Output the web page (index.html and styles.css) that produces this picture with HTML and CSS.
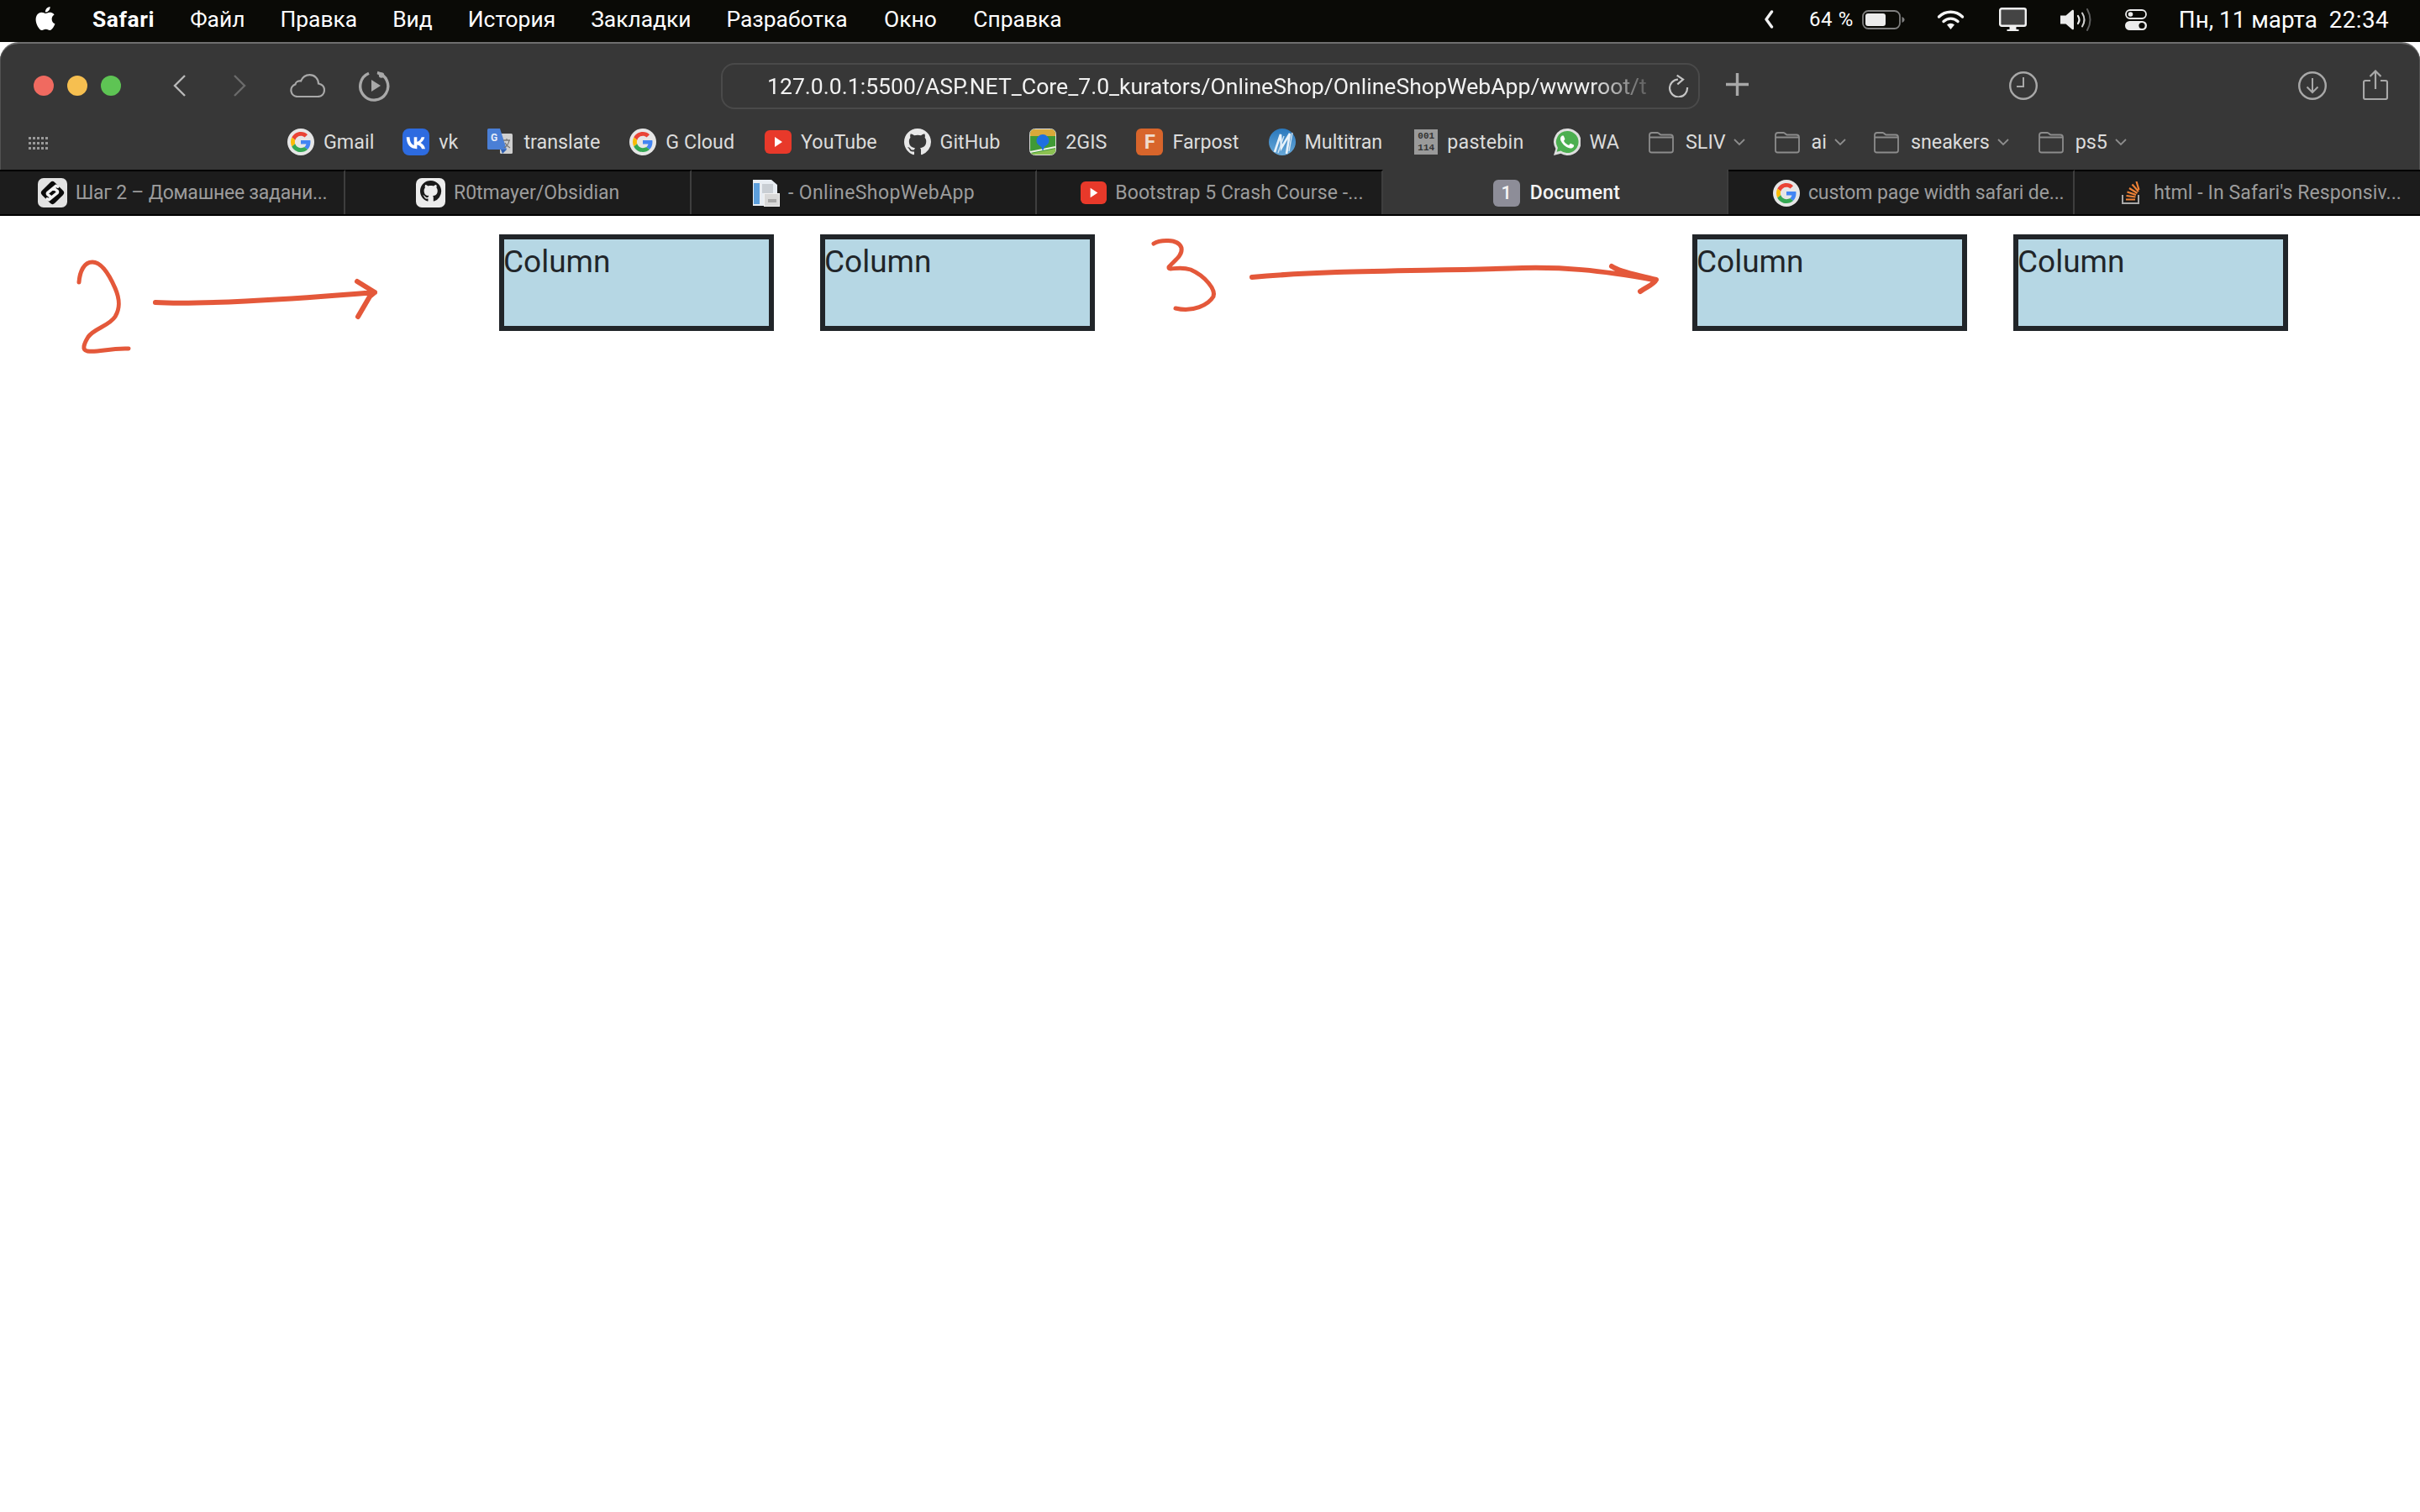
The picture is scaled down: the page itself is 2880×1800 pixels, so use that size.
FILE: index.html
```html
<!DOCTYPE html>
<html lang="ru">
<head>
<meta charset="utf-8">
<title>Document</title>
<link rel="stylesheet" href="styles.css">
</head>
<body>
<svg class="defs" width="0" height="0" aria-hidden="true">
  <symbol id="g" viewBox="-8 -8 64 64">
    <circle cx="24" cy="24" r="32" fill="#e6e6e6"/>
    <path fill="#EA4335" d="M24 9.5c3.54 0 6.71 1.22 9.21 3.6l6.85-6.85C35.9 2.38 30.47 0 24 0 14.62 0 6.51 5.38 2.56 13.22l7.98 6.19C12.43 13.72 17.74 9.5 24 9.5z"/>
    <path fill="#4285F4" d="M46.98 24.55c0-1.57-.15-3.09-.38-4.55H24v9.02h12.94c-.58 2.96-2.26 5.48-4.78 7.18l7.73 6c4.51-4.18 7.09-10.36 7.09-17.65z"/>
    <path fill="#FBBC05" d="M10.53 28.59c-.48-1.45-.76-2.99-.76-4.59s.27-3.14.76-4.59l-7.98-6.19C.92 16.46 0 20.12 0 24c0 3.88.92 7.54 2.56 10.78l7.97-6.19z"/>
    <path fill="#34A853" d="M24 48c6.48 0 11.93-2.13 16.02-5.81l-7.73-6c-2.15 1.45-4.92 2.3-8.29 2.3-6.26 0-11.57-4.22-13.47-9.91l-7.98 6.19C6.51 42.62 14.62 48 24 48z"/>
  </symbol>
  <symbol id="yt" viewBox="0 0 32 32">
    <rect x="0" y="2" width="32" height="28" rx="6" fill="#e8392a"/>
    <path d="M12 10l9 6-9 6z" fill="#fff"/>
  </symbol>
  <symbol id="gh" viewBox="0 0 16 16">
    <path fill="#e8e8e8" d="M8 0C3.58 0 0 3.58 0 8c0 3.54 2.29 6.53 5.47 7.59.4.07.55-.17.55-.38 0-.19-.01-.82-.01-1.49-2.01.37-2.53-.49-2.69-.94-.09-.23-.48-.94-.82-1.13-.28-.15-.68-.52-.01-.53.63-.01 1.08.58 1.23.82.72 1.21 1.87.87 2.33.66.07-.52.28-.87.51-1.07-1.78-.2-3.64-.89-3.64-3.95 0-.87.31-1.59.82-2.15-.08-.2-.36-1.02.08-2.12 0 0 .67-.21 2.2.82.64-.18 1.32-.27 2-.27.68 0 1.36.09 2 .27 1.53-1.04 2.2-.82 2.2-.82.44 1.1.16 1.92.08 2.12.51.56.82 1.27.82 2.15 0 3.07-1.87 3.75-3.65 3.95.29.25.54.73.54 1.48 0 1.07-.01 1.93-.01 2.2 0 .21.15.46.55.38A8.013 8.013 0 0016 8c0-4.42-3.58-8-8-8z"/>
  </symbol>
  <symbol id="folder" viewBox="0 0 30 30">
    <path d="M1 7a3 3 0 0 1 3-3h6.500c2 0 2.500 2.500 4.500 2.500h11a3 3 0 0 1 3 3V25a2.500 2.500 0 0 1-2.500 2.500h-23A2.500 2.500 0 0 1 1 25zM1 9.500h28" fill="none" stroke="#8c8c8c" stroke-width="1.800"/>
  </symbol>
  <symbol id="chev" viewBox="0 0 14 10">
    <path d="M1 2l6 6 6-6" fill="none" stroke="#8d8d8d" stroke-width="1.800"/>
  </symbol>
</svg>

<header class="menubar">
  <div class="menu-left">
    <svg class="apple" viewBox="0 0 24 24"><path fill="#fff" d="M12.152 6.896c-.948 0-2.415-1.078-3.96-1.04-2.04.027-3.91 1.183-4.961 3.014-2.117 3.675-.546 9.103 1.519 12.09 1.013 1.454 2.208 3.09 3.792 3.039 1.52-.065 2.09-.987 3.935-.987 1.831 0 2.35.987 3.96.948 1.637-.026 2.676-1.48 3.676-2.948 1.156-1.688 1.636-3.325 1.662-3.415-.039-.013-3.182-1.221-3.22-4.857-.026-3.04 2.48-4.494 2.597-4.559-1.429-2.09-3.623-2.324-4.39-2.376-2-.156-3.675 1.09-4.61 1.09zM15.53 3.83c.843-1.012 1.4-2.427 1.245-3.83-1.207.052-2.662.805-3.532 1.818-.78.896-1.454 2.338-1.273 3.714 1.338.104 2.715-.688 3.559-1.701"/></svg>
    <span class="menu-app">Safari</span>
    <span>Файл</span><span>Правка</span><span>Вид</span><span>История</span><span>Закладки</span><span>Разработка</span><span class="menu-late">Окно</span><span class="menu-late">Справка</span>
  </div>
  <div class="menu-right">
    <svg class="st-chev" viewBox="0 0 12 22"><path d="M9.500 2L3 11l6.500 9" fill="none" stroke="#f0f0f0" stroke-width="3.400" stroke-linecap="round" stroke-linejoin="round"/></svg>
    <span class="st-batt-text">64 %</span>
    <svg class="st-batt" viewBox="0 0 51 23"><rect x="1" y="1" width="44" height="21" rx="6.500" fill="none" stroke="#7f7f7f" stroke-width="1.800"/><rect x="4" y="4" width="24" height="15" rx="3" fill="#ececec"/><path d="M47.500 8c2 1 3 2 3 3.500s-1 2.500-3 3.500z" fill="#7f7f7f"/></svg>
    <svg class="st-wifi" viewBox="0 0 33 25"><path d="M2.500 9a20 20 0 0 1 28 0M8 14.500a12.500 12.500 0 0 1 17 0" fill="none" stroke="#f4f4f4" stroke-width="3.400" stroke-linecap="round"/><path d="M12 18.500a6.500 6.500 0 0 1 9 0L16.500 24z" fill="#f4f4f4"/></svg>
    <svg class="st-mon" viewBox="0 0 33 28"><rect x="1.200" y="1.200" width="30.600" height="20.600" rx="2" fill="#444" stroke="#f0f0f0" stroke-width="2.400"/><path d="M12.500 23h8v3h3v2h-14v-2h3z" fill="#f0f0f0"/></svg>
    <svg class="st-sound" viewBox="0 0 39 27"><path d="M1 8.500h6.500L15 2c1-.8 2 0 2 1v21c0 1-1 1.800-2 1l-7.500-6.500H1z" fill="#ececec"/><path d="M22 9q3 4.500 0 9" fill="none" stroke="#ececec" stroke-width="2.200" stroke-linecap="round"/><path d="M27 5.500q5 8 0 16" fill="none" stroke="#d0d0d0" stroke-width="2" stroke-linecap="round"/><path d="M33 1q7 12.500 0 25" fill="none" stroke="#5f5f5f" stroke-width="2" stroke-linecap="round"/></svg>
    <svg class="st-ctl" viewBox="0 0 26 25"><rect x="1" y="1" width="24" height="10" rx="5" fill="none" stroke="#ececec" stroke-width="1.800"/><circle cx="6.500" cy="6" r="2.800" fill="#ececec"/><rect x="0" y="14" width="26" height="11" rx="5.500" fill="#ececec"/><circle cx="20" cy="19.500" r="3.600" fill="#0a0a06"/></svg>
    <span class="st-date">Пн, 11 марта</span>
    <span class="st-time">22:34</span>
  </div>
</header>

<div class="window">
  <div class="toolbar">
    <div class="lights"><i class="light red"></i><i class="light yellow"></i><i class="light green"></i></div>
    <svg class="tb-back" viewBox="0 0 17 28"><path d="M15 2L3 14l12 12" fill="none" stroke="#b9b9b9" stroke-width="2.400"/></svg>
    <svg class="tb-fwd" viewBox="0 0 17 28"><path d="M2 2l12 12L2 26" fill="none" stroke="#6b6b6b" stroke-width="2.400"/></svg>
    <svg class="tb-cloud" viewBox="0 0 42 28"><path d="M9 27a7.500 7.500 0 0 1-2.500-14.600C7 9.500 10 8 13 8.500 15 4 19 1.200 23.500 1.200c6 0 10.500 4.500 10.500 10.300 4.500 1 7 4 7 7.500 0 4.500-3 8-8 8z" fill="none" stroke="#a8a8a8" stroke-width="2.200"/></svg>
    <svg class="tb-play" viewBox="0 0 38 38"><path d="M22 3.500a16.500 16.500 0 1 1-10 .8" fill="none" stroke="#a8a8a8" stroke-width="3.400"/><circle cx="27" cy="6.500" r="3.200" fill="#a8a8a8"/><path d="M15 12l11 7-11 7z" fill="#a8a8a8"/></svg>
    <div class="urlbar">
      <span class="url">127.0.0.1:5500/ASP.NET_Core_7.0_kurators/OnlineShop/OnlineShopWebApp/wwwroot/t</span>
      <svg class="tb-reload" viewBox="0 0 24 28"><path d="M11 6.500A10.500 10.500 0 1 0 22 16" fill="none" stroke="#c4c4c4" stroke-width="2.200"/><path d="M9.700 1.700L17 6.700l-6.700 5.600" fill="none" stroke="#c4c4c4" stroke-width="2.200"/></svg>
    </div>
    <svg class="tb-plus" viewBox="0 0 27 27"><path d="M13.500 0v27M0 13.500h27" stroke="#a8a8a8" stroke-width="3.400"/></svg>
    <svg class="tb-clock" viewBox="0 0 34 34"><circle cx="17" cy="17" r="15.800" fill="none" stroke="#a8a8a8" stroke-width="2.400"/><path d="M17 7v11h-8" fill="none" stroke="#a8a8a8" stroke-width="2"/></svg>
    <svg class="tb-dl" viewBox="0 0 34 34"><circle cx="17" cy="17" r="15.800" fill="none" stroke="#a8a8a8" stroke-width="2.400"/><path d="M17 8v17M10.500 18.500L17 25l6.500-6.500" fill="none" stroke="#a8a8a8" stroke-width="2"/></svg>
    <svg class="tb-share" viewBox="0 0 30 36"><path d="M9 13H3a2 2 0 0 0-2 2v18a2 2 0 0 0 2 2h24a2 2 0 0 0 2-2V15a2 2 0 0 0-2-2h-6" fill="none" stroke="#a8a8a8" stroke-width="2.200"/><path d="M15 23V1.500M8.500 8L15 1.500 21.500 8" fill="none" stroke="#a8a8a8" stroke-width="2.200"/></svg>
  </div>

  <nav class="bookmarks">
    <svg class="bm-grid" viewBox="0 0 24 16"><g fill="#9a9a9a"><path d="M0 0h3v3H0zM5 0h3v3H5zM10 0h3v3h-3zM15 0h3v3h-3zM20 0h3v3h-3zM0 6h3v3H0zM5 6h3v3H5zM10 6h3v3h-3zM15 6h3v3h-3zM20 6h3v3h-3zM0 12h3v3H0zM5 12h3v3H5zM10 12h3v3h-3zM15 12h3v3h-3zM20 12h3v3h-3z"/></g></svg>
    <a class="bm"><svg class="ic"><use href="#g"/></svg>Gmail</a>
    <a class="bm bm-vk"><svg class="ic" viewBox="0 0 32 32"><rect width="32" height="32" rx="8" fill="#2d6be0"/><path fill="#fff" transform="translate(-1 0) scale(1.400)" d="M12.800 17.300c-5.500 0-8.600-3.700-8.700-9.900h2.700c.1 4.500 2.100 6.400 3.700 6.800V7.400h2.600v3.900c1.600-.2 3.200-1.900 3.800-3.900h2.600c-.4 2.400-2.200 4.100-3.400 4.800 1.200.6 3.200 2.100 3.900 5.100h-2.800c-.6-1.800-2-3.200-4.100-3.400v3.400h-.3z"/></svg>vk</a>
    <a class="bm"><svg class="ic" viewBox="0 0 32 32"><rect x="15" y="6" width="15" height="24" rx="1.500" fill="#cfcfcf"/><path d="M0 1.500A1.500 1.500 0 0 1 1.500 0H15l8 25H1.500A1.500 1.500 0 0 1 0 23.500z" fill="#4a7fd6"/><path d="M16 25h7l-5 5z" fill="#2f5fb0"/><text class="tr-g" x="4" y="15">G</text><path d="M19 14h8M23 12v2M20 23q5-3 6-9M21 17q2 4 6 6" stroke="#777" stroke-width="1.300" fill="none"/></svg>translate</a>
    <a class="bm"><svg class="ic"><use href="#g"/></svg>G Cloud</a>
    <a class="bm bm-yt"><svg class="ic"><use href="#yt"/></svg>YouTube</a>
    <a class="bm bm-gh"><svg class="ic"><use href="#gh"/></svg>GitHub</a>
    <a class="bm"><svg class="ic" viewBox="0 0 32 32"><rect x=".5" y=".5" width="31" height="31" rx="6" fill="#3f9a35" stroke="#dcdcdc"/><path d="M1 9V6a5 5 0 0 1 5-5h20a5 5 0 0 1 5 5v3z" fill="#d9a93a"/><path d="M1 30l30-6v2a5 5 0 0 1-5 5H6z" fill="#8cc152"/><path d="M1 28l30-6" stroke="#eef3e6" stroke-width="1.800"/><path d="M16 7a7.500 7.500 0 0 1 7.500 7.500c0 4-3 5-5 7-1 1-1.500 2.500-1.500 4h-2c0-1.500-.5-3-1.500-4-2-2-5-3-5-7A7.500 7.500 0 0 1 16 7z" fill="#1f6fe0"/></svg>2GIS</a>
    <a class="bm"><span class="ic-far">F</span>Farpost</a>
    <a class="bm"><svg class="ic" viewBox="0 0 32 32"><defs><linearGradient id="mt" x1="0" y1="0" x2="0" y2="1"><stop offset="0" stop-color="#2a78bd"/><stop offset="1" stop-color="#68a8d8"/></linearGradient></defs><circle cx="16" cy="16" r="16" fill="url(#mt)"/><path d="M7 28L14 7l1 16L25 6l-4 24" stroke="#e8f2fa" stroke-width="2.600" fill="none"/><path d="M11 29L18 9M28 5l-4 22" stroke="#cfe3f3" stroke-width="1.400" fill="none"/></svg>Multitran</a>
    <a class="bm bm-paste"><span class="ic-paste">001<br>114</span>pastebin</a>
    <a class="bm"><svg class="ic ic-wa" viewBox="0 0 24 24"><path fill="#dedede" d="M12 0A11.900 11.900 0 0 0 1.800 18L0 24l6.400-1.700A12 12 0 1 0 12 0z"/><path fill="#4caf50" d="M12 2.200a9.800 9.800 0 0 0-8.300 15l-1 3.600 3.700-1A9.800 9.800 0 1 0 12 2.200z"/><path fill="#fff" d="M17.472 14.382c-.297-.149-1.758-.867-2.030-.967-.273-.099-.471-.148-.670.150-.197.297-.767.966-.940 1.164-.173.199-.347.223-.644.075-.297-.150-1.255-.463-2.390-1.475-.883-.788-1.480-1.761-1.653-2.059-.173-.297-.018-.458.130-.606.134-.133.298-.347.446-.520.149-.174.198-.298.298-.497.099-.198.050-.371-.025-.520-.075-.149-.669-1.612-.916-2.207-.242-.579-.487-.5-.669-.510-.173-.008-.371-.010-.570-.010-.198 0-.520.074-.792.372-.272.297-1.040 1.016-1.040 2.479 0 1.462 1.065 2.875 1.213 3.074.149.198 2.096 3.200 5.077 4.487.709.306 1.262.489 1.694.625.712.227 1.360.195 1.871.118.571-.085 1.758-.719 2.006-1.413.248-.694.248-1.289.173-1.413-.074-.124-.272-.198-.570-.347z"/></svg>WA</a>
    <a class="bm folder"><svg class="ic-folder"><use href="#folder"/></svg>SLIV<svg class="fchev"><use href="#chev"/></svg></a>
    <a class="bm folder"><svg class="ic-folder"><use href="#folder"/></svg>ai<svg class="fchev"><use href="#chev"/></svg></a>
    <a class="bm folder bm-sneak"><svg class="ic-folder"><use href="#folder"/></svg>sneakers<svg class="fchev"><use href="#chev"/></svg></a>
    <a class="bm folder"><svg class="ic-folder"><use href="#folder"/></svg>ps5<svg class="fchev"><use href="#chev"/></svg></a>
  </nav>

  <div class="tabs">
    <div class="tab trunc tab-first"><svg class="tic" viewBox="0 0 36 36"><rect width="36" height="36" rx="7" fill="#e2e2e2"/><rect x="7" y="7" width="22" height="22" rx="4" fill="#0b0b0b" transform="rotate(45 18 18)"/><path d="M24.500 10.500l-2-1-10 8q-1.500 1.500 0 3l4 3M11.500 25.500l2 1 10-8q1.500-1.500 0-3l-4-3" fill="none" stroke="#f2f2f2" stroke-width="3.600" stroke-linecap="round" stroke-linejoin="round"/></svg><span>Шаг 2 – Домашнее задани...</span></div>
    <div class="tab"><svg class="tic" viewBox="0 0 35 35"><rect width="35" height="35" rx="7" fill="#ececec"/><path transform="translate(5 3) scale(1.800)" fill="#1a1a1a" d="M7 0C3.100 0 0 3.100 0 7c0 3.100 2 5.700 4.800 6.600.35.060.48-.150.48-.33 0-.170-.010-.72-.010-1.300-1.760.320-2.210-.430-2.350-.820-.080-.2-.42-.820-.72-.990-.25-.130-.6-.450-.010-.460.550-.010.950.510 1.080.720.630 1.060 1.640.760 2.040.580.060-.460.250-.760.450-.940-1.560-.180-3.190-.780-3.190-3.460 0-.760.270-1.390.720-1.880-.070-.180-.320-.890.070-1.860 0 0 .590-.180 1.930.720.560-.160 1.160-.240 1.750-.240.590 0 1.190.080 1.750.240 1.340-.910 1.930-.720 1.930-.720.390.970.140 1.680.070 1.860.450.490.720 1.110.720 1.880 0 2.690-1.640 3.280-3.200 3.460.250.220.470.640.470 1.300 0 .940-.010 1.690-.010 1.930 0 .180.130.400.480.330A7 7 0 0 0 14 7c0-3.900-3.100-7-7-7z"/></svg><span>R0tmayer/Obsidian</span></div>
    <div class="tab tab-doc"><svg class="tic tic-doc" viewBox="0 0 33 32"><path d="M1 0h22l7 6v25H1z" fill="#e8edf3"/><rect x="2" y="4" width="7" height="25" fill="#5d9fdc"/><rect x="12" y="5" width="13" height="11" fill="#c9ced4"/><rect x="14.500" y="16.500" width="18" height="15" fill="#d8d8d8" stroke="#f2f2f2"/><rect x="19" y="23" width="10" height="4" fill="#a9a9a9"/></svg><span>- OnlineShopWebApp</span></div>
    <div class="tab trunc tab-boot"><svg class="tic tic-yt"><use href="#yt"/></svg><span>Bootstrap 5 Crash Course -...</span></div>
    <div class="tab active"><span class="tic-num">1</span><span>Document</span></div>
    <div class="tab trunc tab-g"><svg class="tic tic-g"><use href="#g"/></svg><span>custom page width safari de...</span></div>
    <div class="tab trunc tab-so"><svg class="tic tic-so" viewBox="0 0 24 28"><path d="M2 16v10h19V16" fill="none" stroke="#a8a8a8" stroke-width="2"/><path d="M6 21.500h11M6.500 17l11 1.500M7.500 12.500l10.500 3.500M10 8l9.500 6M13.500 3.500L21 12M18.500 0l3 10" stroke="#ef8236" stroke-width="2.200" fill="none"/></svg><span>html - In Safari's Responsiv...</span></div>
  </div>
</div>

<main class="page">
  <svg class="scribble" viewBox="0 0 2880 180" aria-hidden="true">
    <g fill="none" stroke="#e4583a" stroke-linecap="round" stroke-linejoin="round">
      <path class="digit" d="M94 79C95 66 100 55 110 55C121 55 130 70 137 86C143 100 143 110 137 120C130 131 112 134 105 144C100 152 97 160 104 161C117 163 130 157 153 158"/>
      <path class="shaft" d="M185 103C230 106 340 100 446 91M425 78L446 91L440 96L426 120"/>
      <path class="digit" d="M1373 33C1379 29 1402 26 1406 38C1408 48 1395 55 1391 61C1390 66 1402 59 1417 64C1435 72 1447 88 1444 96C1438 106 1420 115 1399 110"/>
      <path class="shaft" d="M1490 73C1590 64 1700 66 1812 62C1860 61 1900 64 1968 76M1918 60C1930 68 1950 70 1971 76C1968 82 1960 84 1952 90"/>
    </g>
  </svg>
  <div class="cols">
    <div class="col">Column</div>
    <div class="col">Column</div>
    <div class="col col-far">Column</div>
    <div class="col">Column</div>
  </div>
</main>
</body>
</html>
```

FILE: styles.css
```css
* { box-sizing: border-box; }
html, body { margin: 0; padding: 0; }
body {
  width: 2880px;
  height: 1800px;
  overflow: hidden;
  background: #fff;
  font-family: "Roboto", "Liberation Sans", sans-serif;
}
.defs { position: absolute; }
svg { display: block; flex: none; }

/* Menu bar */
.menubar {
  height: 50px;
  background: #0a0a06;
  color: #fff;
  display: flex;
  justify-content: space-between;
  align-items: center;
  font-size: 26.4px;
  padding: 0 37px 4px 40px;
}
.menu-left { display: flex; align-items: center; gap: 42px; }
.apple { width: 28px; height: 34px; margin-bottom: 3px; }
.menu-app { font-weight: 700; letter-spacing: .6px; }
.menu-late { margin-left: 1.5px; }
.menu-right { display: flex; align-items: center; font-size: 27.8px; }
.st-chev { width: 12px; height: 22px; }
.st-batt-text { margin-left: 42px; font-size: 24px; letter-spacing: .6px; }
.st-batt { width: 51px; height: 23px; margin-left: 10px; }
.st-wifi { width: 33px; height: 25px; margin-left: 38px; }
.st-mon { width: 33px; height: 28px; margin-left: 41px; }
.st-sound { width: 39px; height: 27px; margin-left: 39px; }
.st-ctl { width: 26px; height: 25px; margin-left: 39px; }
.st-date { margin-left: 38px; }
.st-time { margin-left: 14px; letter-spacing: .4px; }

/* Window */
.window {
  background: #373737;
  border-top: 2px solid #6e6e6e;
  border-radius: 22px 22px 0 0;
  box-shadow: inset 1px 0 #525252, inset -1px 0 #525252;
}
.toolbar {
  height: 100px;
  display: flex;
  align-items: center;
  padding-left: 40px;
}
.lights { display: flex; gap: 16px; }
.light { width: 24px; height: 24px; border-radius: 50%; display: block; }
.red { background: #f06a60; }
.yellow { background: #f6bf50; }
.green { background: #5ec454; }
.tb-back { width: 17px; height: 28px; margin-left: 61px; }
.tb-fwd { width: 17px; height: 28px; margin-left: 55px; }
.tb-cloud { width: 42px; height: 28px; margin-left: 51px; }
.tb-play { width: 38px; height: 38px; margin-left: 40px; }
.urlbar {
  width: 1165px;
  height: 55px;
  margin-left: 393px;
  display: flex;
  align-items: center;
  border: 2px solid #4a4a4a;
  border-radius: 16px;
  padding-left: 53px;
  font-size: 26.6px;
  color: #f2f2f2;
}
.url {
  width: 1052px;
  white-space: nowrap;
  -webkit-mask-image: linear-gradient(to right, #000 93%, rgba(0,0,0,.15));
  mask-image: linear-gradient(to right, #000 93%, rgba(0,0,0,.15));
}
.tb-reload { width: 24px; height: 28px; margin-left: 21px; }
.tb-plus { width: 27px; height: 27px; margin-left: 31px; margin-top: -4px; }
.tb-clock { width: 34px; height: 34px; margin-left: 310px; }
.tb-dl { width: 34px; height: 34px; margin-left: 310px; }
.tb-share { width: 30px; height: 36px; margin-left: 43px; margin-top: -2px; }

/* Bookmarks */
.bookmarks {
  height: 50px;
  padding: 0 0 16px 34px;
  display: flex;
  align-items: center;
  font-size: 23.3px;
  color: #dcdcdc;
  gap: 35px;
}
.bm-grid { width: 24px; height: 16px; margin-right: 249px; margin-top: 3px; }
.bm { display: flex; align-items: center; gap: 11px; white-space: nowrap; }
.bm-vk { margin-left: -1px; }
.bm-yt { margin-left: 1px; }
.bm-gh { margin-left: -3px; }
.bm-paste { margin-left: 3px; letter-spacing: .25px; }
.bm-sneak { margin-left: -2px; }
.ic { width: 32px; height: 32px; }
.tr-g { font-size: 12px; font-weight: 700; fill: #e6edf8; }
.ic-far {
  width: 32px; height: 32px;
  background: #d8652b; border-radius: 6px;
  color: #f0dccd; font-weight: 700; font-size: 24px;
  display: flex; align-items: center; justify-content: center;
}
.ic-paste {
  width: 28px; height: 30px;
  background: #9a9a9a; color: #333;
  font-family: "Liberation Mono", monospace; font-size: 11px; line-height: 14px;
  text-align: center; overflow: hidden; font-weight: 700;
  padding-top: 1px; letter-spacing: 0;
}
.folder { gap: 14px; }
.ic-folder { width: 30px; height: 30px; }
.fchev { width: 14px; height: 10px; margin-left: -5px; }

/* Tabs */
.tabs {
  display: grid;
  grid-template-columns: repeat(7, 1fr);
  height: 55px;
  background: #1c1c1c;
  border-bottom: 2px solid #000;
}
.tab {
  display: flex;
  align-items: center;
  justify-content: center;
  gap: 10px;
  font-size: 23px;
  color: #9c9c9c;
  border-top: 2px solid #000;
  border-right: 2px solid #3e3e3e;
  white-space: nowrap;
  overflow: hidden;
}
.tab:last-child { border-right: 0; }
.trunc { justify-content: flex-end; padding-right: 22px; }
.tab-first { letter-spacing: -.25px; padding-right: 20px; }
.tab-doc { letter-spacing: .4px; }
.tab-boot { letter-spacing: .1px; padding-right: 21px; }
.tab-g { letter-spacing: -.12px; padding-right: 10px; }
.tab-so { letter-spacing: .1px; }
.active { background: #373737; color: #f4f4f4; padding: 2px 0 0 4px; border-top: 0; font-weight: 500; gap: 12px; letter-spacing: .2px; }
.tic { width: 35px; height: 35px; }
.tic-doc { width: 33px; height: 32px; }
.tic-yt { width: 31px; height: 31px; }
.tic-g { width: 32px; height: 32px; }
.tic-so { width: 24px; height: 28px; margin-right: 5px; }
.tic-num {
  width: 32px; height: 32px;
  background: #8d8d98; border-radius: 6px;
  color: #f4f4f4; font-size: 22px; font-weight: 500;
  display: flex; align-items: center; justify-content: center;
}

/* Page content */
.page { position: relative; }
.scribble { position: absolute; left: 0; top: 0; width: 2880px; height: 180px; }
.digit { stroke-width: 5px; }
.shaft { stroke-width: 6px; }
.cols { display: flex; gap: 55px; padding: 22px 0 0 594px; }
.col {
  width: 327px;
  height: 115px;
  padding-top: 5px;
  background: #b6d7e4;
  border: 6px solid #212529;
  color: #212529;
  font-size: 37px;
  line-height: 44px;
  text-indent: -1px;
}
.col-far { margin-left: 656px; }
```
